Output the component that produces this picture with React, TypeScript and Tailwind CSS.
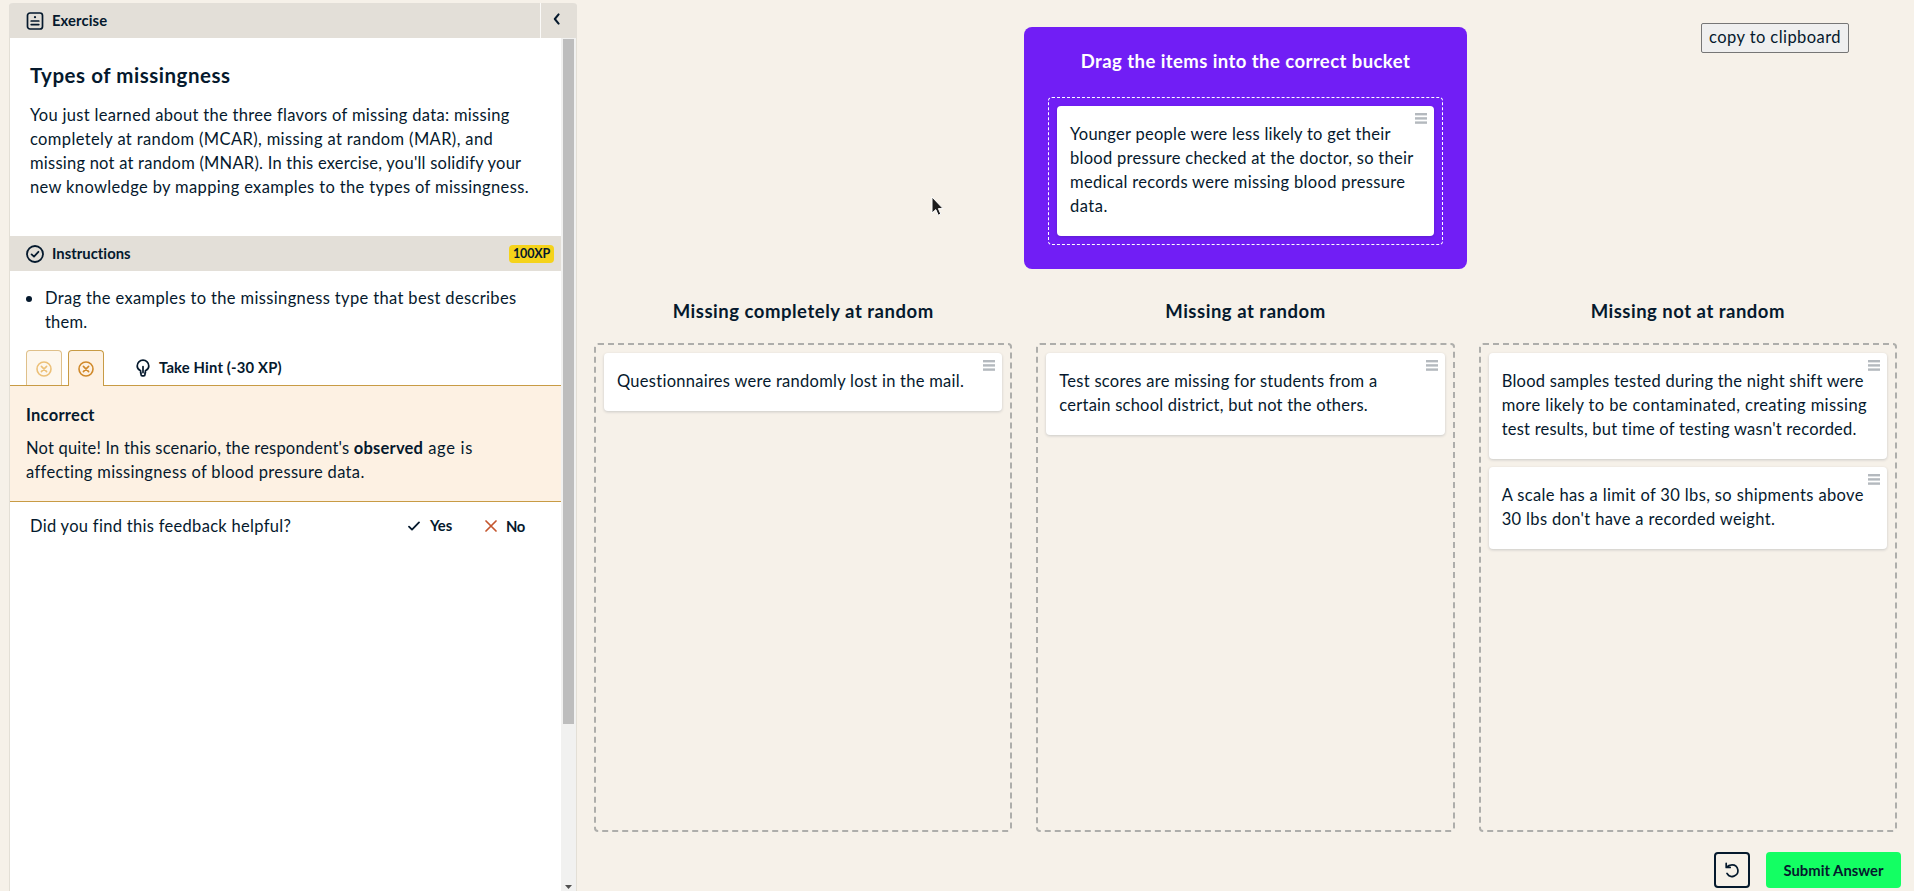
import React from "react";

type TextLine = { text: string; tracking: string };

function Lines({ lines }: { lines: TextLine[] }) {
  return (
    <>
      {lines.map((line) => (
        <span key={line.text} className={`block whitespace-nowrap ${line.tracking}`}>
          {line.text}
        </span>
      ))}
    </>
  );
}

function DragHandle() {
  return (
    <svg className="absolute top-[7px] right-[7px]" width="12" height="11" viewBox="0 0 12 11" fill="#b4b9be">
      <rect width="12" height="2.4" />
      <rect y="4.2" width="12" height="2.4" />
      <rect y="8.4" width="12" height="2.4" />
    </svg>
  );
}

function Card({ lines }: { lines: TextLine[] }) {
  return (
    <div className="relative rounded-[4px] bg-white px-[13px] pt-4 pb-[18px] shadow-[0_1px_3px_rgba(5,25,45,0.18)]">
      <DragHandle />
      <Lines lines={lines} />
    </div>
  );
}

type BucketData = { title: string; tracking: string; cards: TextLine[][] };

const buckets: BucketData[] = [
  {
    title: "Missing completely at random",
    tracking: "tracking-[0.52px]",
    cards: [[{ text: "Questionnaires were randomly lost in the mail.", tracking: "tracking-[0.27px]" }]],
  },
  {
    title: "Missing at random",
    tracking: "tracking-[0.52px]",
    cards: [
      [
        { text: "Test scores are missing for students from a", tracking: "tracking-[0.27px]" },
        { text: "certain school district, but not the others.", tracking: "tracking-[0.235px]" },
      ],
    ],
  },
  {
    title: "Missing not at random",
    tracking: "tracking-[0.5px]",
    cards: [
      [
        { text: "Blood samples tested during the night shift were", tracking: "tracking-[0.255px]" },
        { text: "more likely to be contaminated, creating missing", tracking: "tracking-[0.39px]" },
        { text: "test results, but time of testing wasn't recorded.", tracking: "tracking-[0.227px]" },
      ],
      [
        { text: "A scale has a limit of 30 lbs, so shipments above", tracking: "tracking-[0.357px]" },
        { text: "30 lbs don't have a recorded weight.", tracking: "tracking-[0.345px]" },
      ],
    ],
  },
];

function Bucket({ title, tracking, cards }: BucketData) {
  return (
    <section className="flex flex-1 flex-col">
      <h3 className={`-mt-px h-11 text-center text-[18.5px] leading-6 font-bold ${tracking}`}>{title}</h3>
      <div className="flex h-[489px] flex-col gap-2 rounded-[4px] border-2 border-dashed border-[#aeaeab] p-2">
        {cards.map((lines) => (
          <Card key={lines[0].text} lines={lines} />
        ))}
      </div>
    </section>
  );
}

function WrongIcon() {
  return (
    <svg width="16" height="16" viewBox="0 0 16 16" fill="none" stroke="currentColor" strokeWidth="1.6" strokeLinecap="round">
      <circle cx="8" cy="8" r="7" />
      <path d="M5.4 5.4l5.2 5.2M10.6 5.4l-5.2 5.2" />
    </svg>
  );
}

function ExercisePanel() {
  return (
    <aside className="mt-[3px] ml-[9px] flex h-[888px] w-[568px] flex-col rounded-t-[4px] border-x border-[#e3dfd6] bg-white">
      <header className="-mx-px flex h-[35px] rounded-t-[4px] bg-[#e3dfd8]">
        <div className="flex flex-1 items-center pl-[17px]">
          <svg width="18" height="18" viewBox="0 0 18 18" fill="none" stroke="currentColor" strokeWidth="1.7">
            <rect x="1.500" y="1" width="15" height="16" rx="2.5" />
            <path d="M5.200 9h7.600M5.200 12.600h7.600" strokeLinecap="round" />
            <circle cx="9" cy="5.200" r="1.1" fill="currentColor" stroke="none" />
          </svg>
          <span className="ml-2 pb-px text-[14.8px] leading-[18px] font-bold tracking-[0.1px]">Exercise</span>
        </div>
        <div className="flex w-[37px] justify-center border-l border-[#fbfaf8] pt-[10px] pr-[4px]">
          <svg width="8" height="12" viewBox="0 0 8 12" fill="none" stroke="currentColor" strokeWidth="2" strokeLinecap="round" strokeLinejoin="round">
            <path d="M5.6 1.4L1.8 6l3.8 4.6" />
          </svg>
        </div>
      </header>
      <div className="flex flex-1">
        <div className="flex-1">
          <div className="h-[198px] pt-[25px] pl-5">
            <h1 className="text-[20.5px] leading-6 font-bold tracking-[0.53px]">Types of missingness</h1>
            <div className="mt-4">
              <Lines
                lines={[
                  { text: "You just learned about the three flavors of missing data: missing", tracking: "tracking-[0.315px]" },
                  { text: "completely at random (MCAR), missing at random (MAR), and", tracking: "tracking-[0.375px]" },
                  { text: "missing not at random (MNAR). In this exercise, you'll solidify your", tracking: "tracking-[0.235px]" },
                  { text: "new knowledge by mapping examples to the types of missingness.", tracking: "tracking-[0.355px]" },
                ]}
              />
            </div>
          </div>
          <div className="flex h-[35px] items-center bg-[#e3dfd8] pr-[7px] pl-4">
            <svg width="18" height="18" viewBox="0 0 18 18" fill="none" stroke="currentColor" strokeWidth="1.8" strokeLinecap="round" strokeLinejoin="round">
              <circle cx="9" cy="9" r="8" />
              <path d="M5.6 9.4l2.4 2.2 4.4-4.8" />
            </svg>
            <span className="ml-2 flex-1 pb-px text-[14.8px] leading-[18px] font-bold tracking-[0.03px]">Instructions</span>
            <span className="flex h-[18px] w-[45px] items-center justify-center rounded-[4px] bg-[#f5d31a] text-[12.5px] font-bold tracking-[-0.2px]">
              100XP
            </span>
          </div>
          <div className="relative h-[79px] pt-[15px] pl-[35px]">
            <span className="absolute top-[25px] left-4 size-[6px] rounded-full bg-[#05192d]" />
            <Lines
              lines={[
                { text: "Drag the examples to the missingness type that best describes", tracking: "tracking-[0.355px]" },
                { text: "them.", tracking: "tracking-[0.2px]" },
              ]}
            />
          </div>
          <div className="relative z-10 flex h-9 pl-4">
            <div className="mb-px flex w-9 items-center justify-center rounded-t-[4px] border border-b-0 border-[#dfc08a] bg-[#fdf7ee] pt-[2px] text-[#ecc078]">
              <WrongIcon />
            </div>
            <div className="ml-[6px] flex w-9 items-center justify-center rounded-t-[4px] border border-b-0 border-[#c89b45] bg-[#fdf1e3] pt-[1px] text-[#d0892a]">
              <WrongIcon />
            </div>
            <svg className="mt-[9px] ml-8" width="14" height="18" viewBox="0 0 14 18" fill="none" stroke="currentColor" strokeWidth="1.7" strokeLinecap="round" strokeLinejoin="round">
              <path d="M4.6 13.800v-2C2.400 10.800 1.200 9 1.200 7a5.800 5.800 0 0 1 11.600 0c0 2-1.200 3.800-3.400 4.800v2" />
              <path d="M7 7.600v6M5 14v1.400a1.400 1.400 0 0 0 1.400 1.400h1.200A1.400 1.400 0 0 0 9 15.400V14" />
            </svg>
            <span className="mt-2 ml-[9px] text-[14.8px] leading-[18px] font-bold tracking-[0.17px]">Take Hint (-30 XP)</span>
          </div>
          <div className="-mt-px h-[117px] border-y border-[#c89b45] bg-[#fdf1e3] pt-[17px] pl-4">
            <h2 className="text-[16.5px] leading-6 font-bold tracking-[0.27px]">Incorrect</h2>
            <p className="mt-[9px] whitespace-nowrap">
              <span className="tracking-[0.19px]">Not quite! In this scenario, the respondent's </span>
              <strong className="font-bold tracking-[0.23px]">observed</strong>
              <span className="tracking-[0.7px]"> age is</span>
            </p>
            <p className="tracking-[0.345px]">affecting missingness of blood pressure data.</p>
          </div>
          <div className="flex h-12 items-center pb-px pl-5">
            <span className="w-[378px] tracking-[0.3px]">Did you find this feedback helpful?</span>
            <svg width="12" height="10" viewBox="0 0 12 10" fill="none" stroke="currentColor" strokeWidth="1.8" strokeLinecap="round" strokeLinejoin="round">
              <path d="M1 5.600l3 3L11 1.400" />
            </svg>
            <span className="ml-[10px] w-[55px] pb-px text-[14.8px] font-bold tracking-[-0.05px]">Yes</span>
            <svg width="12" height="12" viewBox="0 0 12 12" fill="none" stroke="#c4562e" strokeWidth="1.7" strokeLinecap="round">
              <path d="M1 1l10 10M11 1L1 11" />
            </svg>
            <span className="ml-[9px] text-[14.8px] font-bold tracking-[-0.4px]">No</span>
          </div>
        </div>
        <div className="flex w-[15px] flex-col items-center justify-between bg-[#f1f1f0] pt-px pb-[2px]">
          <span className="h-[685px] w-[11px] bg-[#bdbdbd]" />
          <svg width="7" height="4" viewBox="0 0 7 4">
            <path d="M0 0h7L3.500 4z" fill="#505050" />
          </svg>
        </div>
      </div>
    </aside>
  );
}

export default function App() {
  return (
    <div className="relative flex h-[891px] w-[1914px] overflow-hidden bg-[#f6f1e9] font-['Lato','Liberation_Sans',sans-serif] text-[16.5px] leading-6 text-[#05192d]">
      <ExercisePanel />
      <main className="flex flex-1 flex-col pr-[17px] pl-[17px]">
        <div className="flex h-[269px] justify-center pt-[27px]">
          <section className="flex w-[443px] flex-col rounded-[8px] bg-[#711ef5] px-6 pt-[22px] pb-6">
            <h2 className="h-12 text-center text-[18.5px] leading-6 font-bold tracking-[0.43px] text-white">
              Drag the items into the correct bucket
            </h2>
            <div className="rounded-[4px] border border-dashed border-white p-2">
              <Card
                lines={[
                  { text: "Younger people were less likely to get their", tracking: "tracking-[0.27px]" },
                  { text: "blood pressure checked at the doctor, so their", tracking: "tracking-[0.28px]" },
                  { text: "medical records were missing blood pressure", tracking: "tracking-[0.31px]" },
                  { text: "data.", tracking: "tracking-[0.5px]" },
                ]}
              />
            </div>
          </section>
        </div>
        <div className="mt-[31px] flex gap-6">
          {buckets.map((bucket) => (
            <Bucket key={bucket.title} {...bucket} />
          ))}
        </div>
        <footer className="-mr-[4px] mt-5 flex h-9 justify-end gap-4">
          <button className="flex w-9 items-center justify-center rounded-[4px] border-2 border-[#05192d]">
            <svg width="14" height="16" viewBox="0 0 14 16" fill="none" stroke="currentColor" strokeWidth="1.7" strokeLinecap="round" strokeLinejoin="round">
              <path d="M1.200 1.400v4h4M1.400 5.200C3 3.400 5.100 2.800 7.100 2.800a5.800 5.800 0 1 1-5.100 8.600" />
            </svg>
          </button>
          <button className="w-[135px] rounded-[4px] bg-[#13ff63] pb-px text-[14.8px] font-bold tracking-[0.03px]">Submit Answer</button>
        </footer>
      </main>
      <button className="absolute top-[23px] left-[1701px] h-[30px] w-[148px] rounded-[2px] border border-[#767676] bg-[#efefef] leading-[26px] tracking-[0.43px]">
        <span className="block pb-[2px]">copy to clipboard</span>
      </button>
      <svg className="absolute top-[196px] left-[931px]" width="13" height="21" viewBox="0 0 13 21">
        <path d="M1 1v16l3.800-3.400 2.400 5.600 2.600-1.100-2.400-5.500H12z" fill="#1c1c1c" stroke="#fff" strokeWidth="1" />
      </svg>
    </div>
  );
}
